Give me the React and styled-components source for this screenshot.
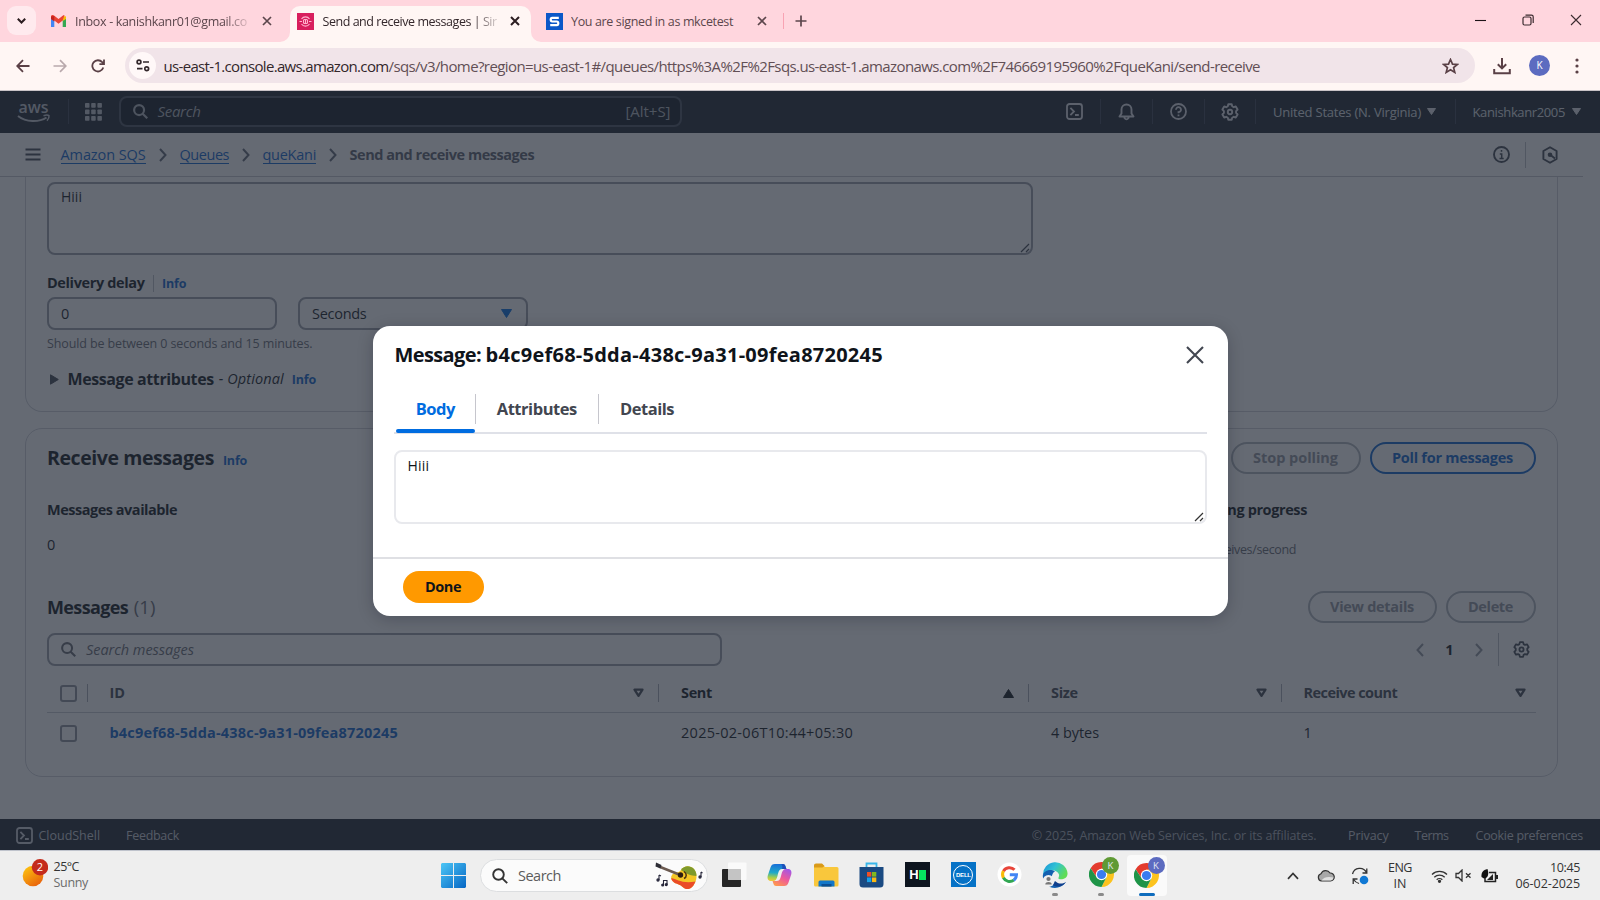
import React from 'react';
import styled, { createGlobalStyle } from 'styled-components';

const Global = createGlobalStyle`
  * { box-sizing: border-box; }
  body {
    margin: 0;
    overflow: hidden;
    font-family: "Open Sans", "Noto Sans", sans-serif;
    background: #fff;
  }
`;

const Screen = styled.div`
  width: 1600px;
  height: 900px;
  display: flex;
  flex-direction: column;
`;

const Text = styled.span`
  display: block;
  flex: none;
  white-space: pre;
  font-size: ${(p) => p.$size || 14.5}px;
  font-weight: ${(p) => p.$weight || 400};
  font-style: ${(p) => (p.$italic ? 'italic' : 'normal')};
  letter-spacing: ${(p) => p.$ls || 0}px;
  line-height: ${(p) => p.$lh || 20}px;
  color: ${(p) => p.$color || 'inherit'};
`;

const Gap = styled.div`
  flex: none;
  width: ${(p) => p.$w}px;
`;

const Spring = styled.div`
  flex: 1;
`;

const Rule = styled.div`
  flex: none;
  width: ${(p) => p.$w || 1}px;
  height: ${(p) => p.$h}px;
  background: ${(p) => p.$color};
`;

/* ---------- Browser window ---------- */

const TabStrip = styled.div`
  height: 42px;
  flex: none;
  display: flex;
  align-items: flex-end;
  background: #ffd6de;
`;

const TabSearch = styled.div`
  width: 29px;
  height: 29px;
  margin: 0 0 7px 7px;
  border-radius: 9px;
  background: #ffeaee;
  display: flex;
  align-items: center;
  justify-content: center;
`;

const Tab = styled.div`
  position: relative;
  width: ${(p) => p.$w}px;
  height: 36px;
  display: flex;
  align-items: center;
  padding: 0 ${(p) => p.$pr || 0}px 6px ${(p) => p.$pl}px;
  border-radius: 10px 10px 0 0;
  background: ${(p) => (p.$active ? '#fff6f4' : 'transparent')};
  color: ${(p) => (p.$active ? '#33272b' : '#5c464c')};
`;

const TabFoot = styled.svg`
  position: absolute;
  bottom: 0;
  ${(p) => (p.$left ? 'left: -10px;' : 'right: -10px;')}
`;

const TabTitle = styled(Text)`
  width: ${(p) => p.$w}px;
  padding-top: 1px;
  overflow: hidden;
  ${(p) => p.$fade && 'mask-image: linear-gradient(90deg, #000 86%, transparent 103%);'}
`;

const WindowButtons = styled.div`
  display: flex;
  align-items: center;
  height: 40px;
  align-self: flex-start;
`;

const WindowButton = styled.div`
  width: 48px;
  display: flex;
  justify-content: center;
`;

const Toolbar = styled.div`
  flex: none;
  height: 49px;
  display: flex;
  align-items: center;
  padding: 0 16px 1px 14px;
  background: #fff6f4;
  border-bottom: 1px solid #c9c3c7;
  color: #5a4046;
`;

const Omnibox = styled.div`
  width: 1350px;
  height: 35px;
  border-radius: 18px;
  background: #f1e4e9;
  display: flex;
  align-items: center;
  padding: 0 16px 0 4px;
`;

const SiteInfo = styled.div`
  width: 27px;
  height: 27px;
  border-radius: 50%;
  background: #fff8f8;
  display: flex;
  align-items: center;
  justify-content: center;
`;

const Avatar = styled.div`
  width: 21px;
  height: 21px;
  border-radius: 50%;
  background: #5c6bc0;
  color: #fff;
  font-size: 10px;
  line-height: 21px;
  text-align: center;
`;

/* ---------- Console page ---------- */

const Page = styled.div`
  position: relative;
  flex: none;
  height: 759px;
  display: flex;
  flex-direction: column;
  background: #fff;
  color: #0f141a;
`;

const Backdrop = styled.div`
  position: absolute;
  inset: 0;
  background: rgba(35, 43, 55, 0.7);
  display: flex;
  justify-content: center;
  align-items: flex-start;
  padding-top: 235px;
`;

const ConsoleHeader = styled.div`
  height: 42px;
  flex: none;
  display: flex;
  align-items: center;
  padding: 0 19px 1px 17px;
  background: #1b222d;
  color: #dfe1e6;
`;

const HeaderSearch = styled.div`
  width: 562.5px;
  height: 31px;
  border: 2px solid #474e5b;
  border-radius: 8px;
  background: #10161f;
  display: flex;
  align-items: center;
  padding: 0 9px 1px 12px;
  color: #b0b4bc;
`;

const Breadcrumbs = styled.div`
  height: 44px;
  width: 1583px;
  flex: none;
  display: flex;
  align-items: center;
  padding: 0 25px 0 24.5px;
  border-bottom: 1px solid #c6c6cd;
`;

const Crumb = styled(Text)`
  color: #0b63ce;
  line-height: 17px;
  border-bottom: 1px solid #0b63ce;
`;

const Content = styled.div`
  flex: 1;
  display: flex;
  flex-direction: column;
  gap: 16px;
  padding: 0 42px 0 25px;
  overflow: hidden;
`;

const Panel = styled.div`
  flex: none;
  height: ${(p) => p.$h}px;
  border: 1px solid #cfd1d8;
  ${(p) => p.$cut && 'border-top: 0;'}
  border-radius: ${(p) => (p.$cut ? '0 0 17px 17px' : '17px')};
  padding: ${(p) => p.$pad};
  display: flex;
  flex-direction: column;
`;

const Field = styled.div`
  position: relative;
  flex: none;
  width: ${(p) => p.$w}px;
  height: ${(p) => p.$h || 33}px;
  border: 2px solid ${(p) => p.$border || '#9a9ea8'};
  border-radius: 8px;
  display: flex;
  align-items: ${(p) => (p.$top ? 'flex-start' : 'center')};
  padding: ${(p) => (p.$top ? '3px' : '0')} 12px 0 12px;
`;

const ResizeGrip = styled.svg`
  position: absolute;
  right: 1px;
  bottom: 0;
`;

const Row = styled.div`
  flex: none;
  display: flex;
  align-items: center;
  height: ${(p) => p.$h}px;
  margin-top: ${(p) => p.$mt || 0}px;
`;

const Info = styled(Text).attrs({ $size: 12.5, $weight: 700, $ls: -0.2, $color: '#0b63ce' })`
  padding-top: ${(p) => p.$drop || 1}px;
`;

const PillButton = styled.div`
  flex: none;
  width: ${(p) => p.$w}px;
  height: 32px;
  border-radius: 16px;
  border: 2px solid ${(p) => (p.$primary ? '#0b63ce' : '#b0b4bc')};
  color: ${(p) => (p.$primary ? '#0b63ce' : '#8f949e')};
  display: flex;
  align-items: center;
  justify-content: center;
`;

const Stats = styled.div`
  display: grid;
  grid-template-columns: 1151px 1fr;
  margin-top: 26px;
`;

const Stat = styled.div`
  display: flex;
  flex-direction: column;
  gap: ${(p) => p.$gap || 15}px;
`;

const TableLine = styled.div`
  flex: none;
  display: grid;
  grid-template-columns: 62.5px 571.5px 370px 252.5px 1fr;
  align-items: center;
  height: ${(p) => p.$h}px;
  ${(p) => p.$head && 'padding-top: 8px; border-bottom: 1px solid #c6c8cf;'}
`;

const Cell = styled.div`
  display: flex;
  align-items: center;
  padding-right: ${(p) => p.$pr || 0}px;
`;

const Checkbox = styled.div`
  flex: none;
  width: 17px;
  height: 17px;
  border: 2px solid #8c919c;
  border-radius: 3px;
  margin: 0 10px 0 13px;
`;

const ConsoleFooter = styled.div`
  height: 31px;
  flex: none;
  display: flex;
  align-items: center;
  padding: 2px 17px 0 16px;
  background: #1b222d;
  color: #c9ccd3;
`;

/* ---------- Dialog ---------- */

const Dialog = styled.div`
  width: 855px;
  height: 290px;
  border-radius: 17px;
  background: #fff;
  box-shadow: 0 3px 16px rgba(0, 7, 22, 0.22);
  display: flex;
  flex-direction: column;
  color: #0f141a;
`;

const DialogHead = styled.div`
  height: 57px;
  display: flex;
  align-items: center;
  justify-content: space-between;
  padding: 0 24px 0 22px;
`;

const DialogTitle = styled.div`
  display: flex;
`;

const DialogBody = styled.div`
  flex: 1;
  padding: 0 21px 0 21px;
`;

const Tabs = styled.div`
  display: flex;
  height: 51px;
  border-bottom: 2px solid #dfe1e8;
  margin-bottom: 16px;
`;

const TabItem = styled.div`
  width: ${(p) => p.$w}px;
  margin-left: ${(p) => p.$ml || 0}px;
  height: 51px;
  display: flex;
  align-items: center;
  justify-content: center;
  color: ${(p) => (p.$on ? '#006ce0' : '#424650')};
  position: relative;
  &::after {
    content: '';
    display: ${(p) => (p.$on ? 'block' : 'none')};
    position: absolute;
    left: 0;
    right: 0;
    bottom: 1px;
    height: 4px;
    border-radius: 2px;
    background: #006ce0;
  }
`;

const DialogFoot = styled.div`
  height: 59px;
  border-top: 2px solid #dfe0e4;
  padding: 11.5px 30px;
`;

const DoneButton = styled.div`
  width: 81px;
  height: 32px;
  border-radius: 16px;
  background: #ff9900;
  display: flex;
  align-items: center;
  justify-content: center;
`;

/* ---------- Taskbar ---------- */

const Taskbar = styled.div`
  flex: none;
  height: 50px;
  border-top: 1px solid #bfc3cc;
  background: #eeeeee;
  display: flex;
  align-items: center;
  color: #333;
`;

const Weather = styled.div`
  width: 441px;
  padding: 0 0 2px 21px;
  display: flex;
  align-items: center;
`;

const Lines = styled.div`
  display: flex;
  flex-direction: column;
  align-items: ${(p) => p.$align || 'flex-start'};
  padding-top: ${(p) => p.$drop || 0}px;
`;

const TaskSearch = styled.div`
  width: 228px;
  height: 33px;
  border-radius: 17px;
  background: #fbfbfb;
  border: 1px solid #dcdee0;
  display: flex;
  align-items: center;
  padding: 0 3px 0 11px;
  margin: 0 0 0 14px;
`;

const TaskIcon = styled.div`
  position: relative;
  flex: none;
  width: ${(p) => p.$w || 45.9}px;
  height: 42px;
  padding-bottom: 2px;
  border-radius: 5px;
  display: flex;
  align-items: center;
  justify-content: center;
`;

const ActiveTile = styled.div`
  position: relative;
  width: 40px;
  height: 41px;
  border-radius: 4px;
  background: #fafafa;
  display: flex;
  align-items: center;
  justify-content: center;
`;

const Dot = styled.div`
  position: absolute;
  bottom: ${(p) => (p.$on ? 0 : 0.5)}px;
  left: calc(50% - ${(p) => (p.$on ? 8 : 3)}px);
  width: ${(p) => (p.$on ? 16 : 6)}px;
  height: 3px;
  border-radius: 2px;
  background: ${(p) => (p.$on ? '#0f6cbd' : '#8a8a8a')};
`;

const ProfileBadge = styled.div`
  position: absolute;
  top: 2px;
  right: ${(p) => p.$right}px;
  width: 17px;
  height: 17px;
  border-radius: 50%;
  background: ${(p) => p.$bg};
  color: #e4e8f4;
  font-size: 9.5px;
  line-height: 17px;
  text-align: center;
`;

const HTile = styled.div`
  width: 25px;
  height: 25px;
  background: #0d141e;
  color: #fff;
  display: flex;
  align-items: center;
  justify-content: center;
  font: 900 13px/25px "Liberation Sans", sans-serif;
  &::after {
    content: '';
    width: 7px;
    height: 10px;
    background: #05e360;
  }
`;

const DellTile = styled.div`
  width: 25px;
  height: 25px;
  background: #0672c6;
  display: flex;
  align-items: center;
  justify-content: center;
`;

const DellRing = styled.div`
  width: 20px;
  height: 20px;
  border: 1px solid #fff;
  border-radius: 50%;
  color: #fff;
  font: 700 6px/18px "Liberation Sans", sans-serif;
  letter-spacing: -0.2px;
  text-align: center;
`;

/* ---------- Icons ---------- */

const Icon = styled.svg`
  flex: none;
`;

const Stroke = ({ w, h = w, vb, sw = 2, children, ...rest }) => (
  <Icon width={w} height={h} viewBox={vb || `0 0 ${w} ${h}`} fill="none" stroke="currentColor"
    strokeWidth={sw} {...rest}>{children}</Icon>
);

const Cross = ({ s = 8, sw = 1.7, color = 'currentColor' }) => (
  <Stroke w={s + 2} sw={sw} stroke={color}><path d={`M1 1L${s + 1} ${s + 1}M${s + 1} 1L1 ${s + 1}`} /></Stroke>
);

const Caret = ({ w = 10, h = 8, up, color = 'currentColor' }) => (
  <Stroke w={w} h={h} sw={1} fill={color} stroke={color} strokeLinejoin="round">
    <path d={up ? `M.5 ${h - 0.5}L${w / 2} .5L${w - 0.5} ${h - 0.5}Z` : `M.5 .5H${w - 0.5}L${w / 2} ${h - 0.5}Z`} />
  </Stroke>
);

const SortCaret = () => (
  <Stroke w={11} h={10} sw={2.3} color="#424650" strokeLinejoin="round"><path d="M1.5 1.6H9.5L5.5 7.8Z" /></Stroke>
);

const Magnifier = ({ s = 16, sw = 2, color }) => (
  <Stroke w={s} vb="0 0 16 16" sw={sw} color={color}><circle cx="6.5" cy="6.5" r="5.3" /><path d="M10.3 10.3L15.2 15.2" /></Stroke>
);

const Gear = ({ s = 18, color }) => (
  <Stroke w={s} vb="0 0 18 18" sw={1.9} strokeLinejoin="round" color={color}>
    <path d="M7.3 1.2H10.7L11.2 3.3L12.7 4.2L14.8 3.5L16.6 6.5L15.1 8.1V9.9L16.6 11.5L14.8 14.5L12.7 13.8L11.2 14.7L10.7 16.8H7.3L6.8 14.7L5.3 13.8L3.2 14.5L1.4 11.5L2.9 9.9V8.1L1.4 6.5L3.2 3.5L5.3 4.2L6.8 3.3Z" />
    <circle cx="9" cy="9" r="2.2" />
  </Stroke>
);

const ShellIcon = ({ s = 17 }) => (
  <Stroke w={s} vb="0 0 17 17" sw={1.8}>
    <rect x="1" y="1" width="15" height="15" rx="2.5" />
    <path d="M4.4 4.8L8 8.5L4.4 12.2M9 12H12.8" />
  </Stroke>
);

const Chevron = ({ left, color = '#5f6573', w = 8, h = 14, sw = 2 }) => (
  <Stroke w={w} h={h} sw={sw} color={color} vb="0 0 8 14"><path d={left ? 'M7 1L1.5 7L7 13' : 'M1 1L6.5 7L1 13'} /></Stroke>
);

const Grip = ({ color }) => (
  <ResizeGrip width="10" height="10" viewBox="0 0 10 10" stroke={color} strokeWidth="1.2" fill="none">
    <path d="M1 9L9 1M6 9L9 6" />
  </ResizeGrip>
);

const Chrome = ({ s = 25 }) => (
  <Icon width={s} height={s} viewBox="0 0 48 48">
    <path d="M24 13H45.3A24 24 0 0 0 3.2 12L14.5 29.5Z" fill="#e33b2e" />
    <path d="M33.5 29.5L24 48A24 24 0 0 0 45.3 13H24Z" fill="#fcc31e" />
    <path d="M14.5 29.5L3.2 12A24 24 0 0 0 24 48L33.5 29.5Z" fill="#1e9447" />
    <circle cx="24" cy="24" r="11" fill="#fff" />
    <circle cx="24" cy="24" r="8.8" fill="#3a7cf0" />
  </Icon>
);

const AwsLogo = () => (
  <Icon width="34" height="32" viewBox="0 0 34 32" fill="none">
    <text x="1.5" y="17" fontFamily="Open Sans, sans-serif" fontSize="16" fontWeight="600" textLength="30"
      lengthAdjust="spacingAndGlyphs" fill="#c3c6cd">aws</text>
    <path d="M1 20C9 26.500 22 26.500 29.500 21.500" stroke="#c3c6cd" strokeWidth="2" />
    <path d="M26.500 19.700C29 18.900 31 18.900 32 19.700C32.300 21.100 31.500 23.100 30 24.700" stroke="#c3c6cd" strokeWidth="1.500" />
  </Icon>
);

const Guitar = () => (
  <Icon width="50" height="30" viewBox="0 0 50 30" fill="none">
    <path d="M18 14C20 11 24 13 27 9C30 4.500 36 4 40 8C44 13 43 20 39 25C36 29 31 28.500 28 25.500C25 22.500 22 23.500 19 20.500C17 18.500 16.500 16 18 14Z" fill="#f3c626" />
    <path d="M27 9C30 4.500 36 4 40 8C41.800 10.200 42.600 12.500 42.400 15C37 15 31 12 27 9Z" fill="#7f9a2c" />
    <path d="M17.300 17C23 18 28 23 41.500 20.500C40 24 38.500 26 37.500 26.500C34.500 29 31 28.500 28 25.500C25 22.500 22 23.500 19 20.500C18 19.500 17.300 18.500 17.300 17Z" fill="#ea4b28" />
    <path d="M5 5.500L27 14.200" stroke="#6b5a50" strokeWidth="2.600" />
    <path d="M2 1.500L7.500 4L6.500 7.500L1.500 5.500Z" fill="#2e2e36" />
    <circle cx="26.500" cy="14" r="2.700" fill="#2c1d12" />
    <path d="M30 10.500C33 12.500 33 16 30 17.500" stroke="#4a3512" strokeWidth="1.500" />
    <g stroke="#26263a" strokeWidth="1.100" fill="#26263a">
      <path d="M5 14V19M5 14L7 15" /><circle cx="4" cy="19" r="1.100" />
      <path d="M9.500 24V19.500H13V23.500" fill="none" /><circle cx="8.700" cy="24" r="1" /><circle cx="12.300" cy="23.600" r="1" />
      <path d="M47 11V16M47 11L48.500 12" /><circle cx="46" cy="16" r="1.100" />
    </g>
  </Icon>
);

const GoogleG = () => (
  <Icon width="25" height="25" viewBox="0 0 25 25" fill="none" strokeWidth="3">
    <circle cx="12.500" cy="12.500" r="12" fill="#fff" />
    <path d="M17.500 7.800A7 7 0 0 0 6.400 9.200" stroke="#e8453a" />
    <path d="M6.400 9.100A7 7 0 0 0 6.400 15.900" stroke="#f9bb06" />
    <path d="M6.400 15.800A7 7 0 0 0 16.800 18.100" stroke="#32a753" />
    <path d="M16.700 18.200A7 7 0 0 0 19.500 12.800H12.800" stroke="#4285f4" />
  </Icon>
);

const Edge = () => (
  <Icon width="26" height="26" viewBox="0 0 26 26">
    <defs>
      <linearGradient id="edgeTop" x1="0" y1="0" x2="1" y2="0.500">
        <stop offset="0" stopColor="#1a8fd8" /><stop offset="0.500" stopColor="#30c2d4" /><stop offset="1" stopColor="#5fdc56" />
      </linearGradient>
    </defs>
    <path d="M1 13A12.300 12.300 0 0 1 25.500 11C26 16 20.500 18 17 17C15.500 16.500 17.500 15 17 12.500C15.500 7.500 6 6 1 13Z" fill="url(#edgeTop)" />
    <path d="M0.800 14C1 9 8 6 13 9.500C9 11 8 20 14.500 22C18 23 21 22.500 24 20C19 27 10 27.500 5 23C2 20.500 .8 17 .8 14Z" fill="#1360b0" />
    <path d="M10 22C14 26 20 25.500 24 20C20 22.500 16 22 13 19Z" fill="#103f8c" />
    <circle cx="6.500" cy="19" r="6" fill="#efefef" />
    <circle cx="6.500" cy="17" r="2.100" fill="#777" /><path d="M3.300 22.500C3.300 19.300 9.700 19.300 9.700 22.500Z" fill="#777" />
  </Icon>
);

const Copilot = () => (
  <Icon width="25" height="24" viewBox="0 0 25 24">
    <defs>
      <linearGradient id="copA" x1="0.300" y1="0" x2="0.200" y2="1">
        <stop offset="0" stopColor="#1870d8" /><stop offset="0.500" stopColor="#1fa9c9" /><stop offset="0.800" stopColor="#a8cf4a" /><stop offset="1" stopColor="#f5c83a" />
      </linearGradient>
      <linearGradient id="copB" x1="0.800" y1="0" x2="0.200" y2="1">
        <stop offset="0" stopColor="#a257e6" /><stop offset="0.500" stopColor="#ee5a9a" /><stop offset="1" stopColor="#ff9a4a" />
      </linearGradient>
    </defs>
    <path d="M8 1H16C18.500 1 18.500 4 19.500 6H15C12 6 11.500 9 10.500 13C9.800 16 8.500 18 6 18H4C1 18 0 15.500 .8 12.500L3.500 4.500C4.300 2 5.500 1 8 1Z" fill="url(#copA)" />
    <path d="M17 23H9C6.500 23 6.500 20 5.500 18H10C13 18 13.500 15 14.500 11C15.200 8 16.500 6 19 6H21C24 6 25 8.500 24.200 11.500L21.500 19.500C20.700 22 19.500 23 17 23Z" fill="url(#copB)" />
    <path d="M16 1C18.500 1 18.500 4 19.500 6H15C16 4 15 1 14 1Z" fill="#1d4fb8" />
  </Icon>
);

/* ---------- Page parts ---------- */

const BrowserTabs = () => (
  <TabStrip>
    <TabSearch><Stroke w={9} h={6} sw={2} color="#2b1d20"><path d="M.8 .8L4.500 4.500L8.200 .8" /></Stroke></TabSearch>
    <Tab $w={254} $pl={15}>
      <Icon width="15" height="12" viewBox="0 0 15 12">
        <path d="M0 1.500V12H3.300V4.800Z" fill="#4285f4" /><path d="M15 1.500V12H11.700V4.800Z" fill="#34a853" />
        <path d="M11.700 1L15 1.500V4L11.700 6Z" fill="#fbbc04" />
        <path d="M0 4V1.400C0 0 1.800-.5 3 .5L7.500 4L12 .5C12.500 0 13.500 0 13.500 0L11.700 5.500L7.500 8.700L3.300 5.500Z" fill="#ea4335" />
        <path d="M0 1.500V4L3.300 6.500V1Z" fill="#c5221f" />
      </Icon>
      <Gap $w={9} />
      <TabTitle $w={173} $size={12.5} $ls={-0.33} $fade>Inbox - kanishkanr01@gmail.co</TabTitle>
      <Gap $w={13.500} />
      <Cross />
    </Tab>
    <Tab $w={241} $pl={7} $active>
      <TabFoot $left width="10" height="10"><path d="M10 0V10H0A10 10 0 0 0 10 0Z" fill="#fff6f4" /></TabFoot>
      <TabFoot width="10" height="10"><path d="M0 0V10H10A10 10 0 0 1 0 0Z" fill="#fff6f4" /></TabFoot>
      <Icon width="17" height="17" viewBox="0 0 17 17" fill="none" stroke="#ffb5cf" strokeWidth="1.100">
        <rect width="17" height="17" fill="#d81f5e" stroke="none" />
        <path d="M4.500 6A4.800 4.800 0 0 1 12.500 6M4.500 11A4.800 4.800 0 0 0 12.500 11" />
        <rect x="6.500" y="6.500" width="4" height="4" rx="1" /><path d="M2.500 8.500H5M12 8.500H14.500M8.500 7V10" />
      </Icon>
      <Gap $w={8.500} />
      <TabTitle $w={174} $size={12.5} $ls={-0.46} $fade>Send and receive messages | Sir</TabTitle>
      <Gap $w={13} />
      <Cross color="#2b1d20" sw={2} />
    </Tab>
    <Tab $w={253} $pl={15} $pr={0}>
      <Icon width="17" height="17" viewBox="0 0 17 17">
        <rect width="17" height="17" fill="#0b57c8" />
        <path d="M12.800 4.800H6.200Q4.700 4.800 4.700 6.600T6.200 8.500H10.800Q12.300 8.500 12.300 10.300T10.800 12.200H4.200" stroke="#fff" strokeWidth="2.200" fill="none" />
      </Icon>
      <Gap $w={8} />
      <TabTitle $w={170} $size={12.5} $ls={-0.36}>You are signed in as mkcetest</TabTitle>
      <Gap $w={16} />
      <Cross />
      <Spring />
      <Rule $w={1.500} $h={16} $color="#f8a3b3" />
    </Tab>
    <Tab $w={38} $pl={11}><Stroke w={12} sw={1.700}><path d="M6 .5V11.500M.5 6H11.500" /></Stroke></Tab>
    <Spring />
    <WindowButtons>
      <WindowButton><Stroke w={11} sw={1.100} color="#1c1316"><path d="M0 5.500H11" /></Stroke></WindowButton>
      <WindowButton>
        <Stroke w={12} sw={1.200} color="#3b2b2f"><rect x="1" y="3" width="8" height="8" rx="1.500" /><path d="M3.500 1.100H9.500Q11.200 1.100 11.200 2.800V9" /></Stroke>
      </WindowButton>
      <WindowButton><Cross s={10} sw={1.100} color="#3b2b2f" /></WindowButton>
    </WindowButtons>
  </TabStrip>
);

const BrowserToolbar = () => (
  <Toolbar>
    <Gap $w={2} />
    <Stroke w={14} sw={1.800}><path d="M13.500 7H1.500M7 1.200L1.200 7L7 12.800" /></Stroke>
    <Gap $w={23} />
    <Stroke w={14} sw={1.700} color="#b9a9ac"><path d="M.5 7H12.500M7 1.200L12.800 7L7 12.800" /></Stroke>
    <Gap $w={24} />
    <Stroke w={14} sw={1.800}><path d="M12.300 8.500A5.600 5.600 0 1 1 11.200 3.200L12.800 4.800M13 .6V5.200H8.400" /></Stroke>
    <Gap $w={20} />
    <Omnibox>
      <SiteInfo>
        <Stroke w={14} h={13} sw={1.700} color="#33272b"><circle cx="3" cy="3" r="1.900" /><path d="M7 3H13M1 9.700H6.500" /><circle cx="10.700" cy="9.700" r="1.900" /></Stroke>
      </SiteInfo>
      <Gap $w={7.500} />
      <Text $size={15} $ls={-0.67} $color="#33272b">us-east-1.console.aws.amazon.com</Text>
      <Text $size={15} $ls={-0.59} $color="#624f55">/sqs/v3/home?region=us-east-1#/queues/https%3A%2F%2Fsqs.us-east-1.amazonaws.com%2F746669195960%2FqueKani/send-receive</Text>
      <Spring />
      <Stroke w={17} h={16} sw={1.700} vb="0 0 17 16"><path d="M8.500 1.500L10.500 6.100L15.300 6.500L11.600 9.600L12.800 14.400L8.500 11.800L4.200 14.400L5.400 9.600L1.700 6.500L6.500 6.100Z" /></Stroke>
    </Omnibox>
    <Gap $w={18} />
    <Stroke w={18} h={18} sw={2}><path d="M9 1V11M4.800 7.200L9 11.400L13.200 7.200M1.200 12V16.200H16.800V12" /></Stroke>
    <Gap $w={18} />
    <Avatar>K</Avatar>
    <Spring />
    <Icon width="4" height="16" viewBox="0 0 4 16" fill="#5a4046"><circle cx="2" cy="2" r="1.600" /><circle cx="2" cy="8" r="1.600" /><circle cx="2" cy="14" r="1.600" /></Icon>
    <Gap $w={5} />
  </Toolbar>
);

const HeaderRule = () => <Rule $h={25} $color="#3a4250" />;

const TopNav = () => (
  <ConsoleHeader>
    <AwsLogo />
    <Gap $w={17} /><HeaderRule /><Gap $w={16} />
    <Icon width="17" height="18" viewBox="0 0 17 18" fill="#c3c6cd">
      {[0, 1, 2].map((r) => [0, 1, 2].map((c) => <rect key={`${r}${c}`} x={c * 6.2} y={r * 6.5} width="4.500" height="4.700" rx="0.800" />))}
    </Icon>
    <Gap $w={17} />
    <HeaderSearch>
      <Magnifier s={15} sw={2.300} />
      <Gap $w={9.500} />
      <Text $size={15} $ls={-0.31} $italic>Search</Text>
      <Spring />
      <Text $size={15} $ls={-0.03}>[Alt+S]</Text>
    </HeaderSearch>
    <Spring />
    <ShellIcon /><Gap $w={17} /><HeaderRule /><Gap $w={17} />
    <Stroke w={17} h={18} sw={1.900} strokeLinejoin="round">
      <path d="M1.500 13.500L3.500 10.500V6.500A5 5 0 0 1 13.500 6.500V10.500L15.500 13.500Z" /><path d="M6.500 14V15Q8.500 17.800 10.500 15V14" />
    </Stroke>
    <Gap $w={17} /><HeaderRule /><Gap $w={17} />
    <Stroke w={17} sw={1.800}>
      <circle cx="8.500" cy="8.500" r="7.500" /><path d="M6 6.800A2.500 2.500 0 1 1 8.500 9.200V10.200M8.500 11.500V13.200" />
    </Stroke>
    <Gap $w={17} /><HeaderRule /><Gap $w={16} />
    <Gear s={18} />
    <Gap $w={16} /><HeaderRule /><Gap $w={17} />
    <Text $size={13} $ls={-0.22}>United States (N. Virginia)</Text>
    <Gap $w={6} /><Caret w={9} h={7} />
    <Gap $w={18.500} /><HeaderRule /><Gap $w={17} />
    <Text $size={13} $ls={-0.37}>Kanishkanr2005</Text>
    <Gap $w={7} /><Caret w={9} h={7} />
  </ConsoleHeader>
);

const BreadcrumbBar = () => (
  <Breadcrumbs>
    <Stroke w={16} h={13} sw={2.200} color="#424650"><path d="M.5 1.500H15.500M.5 6.500H15.500M.5 11.500H15.500" /></Stroke>
    <Gap $w={20} />
    <Crumb $ls={-0.1}>Amazon SQS</Crumb>
    <Gap $w={13} /><Chevron /><Gap $w={13} />
    <Crumb $ls={-0.46}>Queues</Crumb>
    <Gap $w={13} /><Chevron /><Gap $w={12.500} />
    <Crumb $ls={-0.27}>queKani</Crumb>
    <Gap $w={12.500} /><Chevron /><Gap $w={13} />
    <Text $ls={-0.47} $weight={700} $color="#5a606c">Send and receive messages</Text>
    <Spring />
    <Stroke w={17} sw={1.900} color="#424650"><circle cx="8.500" cy="8.500" r="7.500" /><path d="M8.500 4V5.800M6.800 8H8.700V12.500M6.500 12.500H10.700" strokeWidth="1.500" /></Stroke>
    <Gap $w={15.500} /><Rule $h={26} $color="#bcbec6" /><Gap $w={16} />
    <Stroke w={16} h={18} sw={1.900} color="#424650" strokeLinejoin="round"><path d="M8 1.200L14.600 5V13L8 16.800L1.400 13V5Z" /><circle cx="8" cy="8.800" r="2.300" fill="currentColor" stroke="none" /><path d="M8.500 9L13 12.500" /></Stroke>
  </Breadcrumbs>
);

const SendPanel = () => (
  <Panel $h={235} $cut $pad="5px 21px 0 21px">
    <Field $w={985.500} $h={73} $top><Text $size={14} $lh={20}>Hiii</Text><Grip color="#424650" /></Field>
    <Row $h={20} $mt={18} >
      <Text $weight={700} $ls={-0.37}>Delivery delay</Text>
      <Gap $w={8.500} /><Rule $h={17} $color="#bcbec6" /><Gap $w={8} />
      <Info>Info</Info>
    </Row>
    <Row $h={33} $mt={4}>
      <Field $w={230}><Text>0</Text></Field>
      <Gap $w={21} />
      <Field $w={230}><Text $ls={-0.28}>Seconds</Text><Spring /><Caret w={11} h={9} color="#006ce0" /><Gap $w={2} /></Field>
    </Row>
    <Row $h={20} $mt={4}><Text $size={12.5} $ls={-0.12} $color="#656871">Should be between 0 seconds and 15 minutes.</Text></Row>
    <Row $h={24} $mt={13}>
      <Gap $w={3} />
      <Stroke w={9} h={11} sw={1} fill="#424650" color="#424650"><path d="M.5 .8L8.300 5.500L.5 10.200Z" /></Stroke>
      <Gap $w={8.500} />
      <Text $size={16} $weight={700} $ls={-0.4} $lh={24}>Message attributes</Text>
      <Gap $w={5} />
      <Text $italic $ls={0.11} $lh={24}>- Optional</Text>
      <Gap $w={8} />
      <Info>Info</Info>
    </Row>
  </Panel>
);

const ReceivePanel = () => (
  <Panel $h={349} $pad="13px 21.500px 0 21px">
    <Row $h={32}>
      <Text $size={19.5} $weight={700} $ls={-0.42} $lh={28}>Receive messages</Text>
      <Gap $w={9} /><Info $drop={5}>Info</Info>
      <Spring />
      <PillButton $w={130}><Text $weight={700} $ls={-0.03}>Stop polling</Text></PillButton>
      <Gap $w={9} />
      <PillButton $w={166} $primary><Text $weight={700} $ls={-0.27}>Poll for messages</Text></PillButton>
    </Row>
    <Stats>
      <Stat><Text $weight={700} $ls={-0.48}>Messages available</Text><Text>0</Text></Stat>
      <Stat $gap={20}><Text $weight={700} $ls={-0.4}>Polling progress</Text><Text $size={12.5} $ls={-0.37} $color="#656871">0 receives/second</Text></Stat>
    </Stats>
    <Row $h={32} $mt={31}>
      <Text $size={18} $weight={700} $ls={-0.62} $lh={28}>Messages</Text>
      <Gap $w={5.500} /><Text $size={18.5} $lh={28} $ls={0.17} $color="#656871">(1)</Text>
      <Spring />
      <PillButton $w={129}><Text $weight={700} $ls={-0.29}>View details</Text></PillButton>
      <Gap $w={9} />
      <PillButton $w={90}><Text $weight={700} $ls={-0.36}>Delete</Text></PillButton>
    </Row>
    <Row $h={33} $mt={10}>
      <Field $w={675}><Magnifier s={15} sw={2.200} color="#656871" /><Gap $w={10} /><Text $italic $ls={-0.05} $color="#656871">Search messages</Text></Field>
      <Spring />
      <Chevron left color="#8f949e" /><Gap $w={21.500} /><Text $weight={700}>1</Text><Gap $w={21} /><Chevron color="#8f949e" />
      <Gap $w={15.500} /><Rule $h={33} $color="#bcbec6" /><Gap $w={14} /><Gear s={17} color="#424650" /><Gap $w={5.500} />
    </Row>
    <TableLine $head $h={47}>
      <Cell><Checkbox /><Rule $h={18} $color="#a7abb4" /></Cell>
      <Cell $pr={22}><Text $weight={700} $color="#424650">ID</Text><Spring /><SortCaret /><Gap $w={14} /><Rule $h={18} $color="#a7abb4" /></Cell>
      <Cell $pr={22}><Text $weight={700} $ls={-0.34}>Sent</Text><Spring /><Caret up w={11} h={9} /><Gap $w={14} /><Rule $h={18} $color="#a7abb4" /></Cell>
      <Cell $pr={22}><Text $weight={700} $ls={-0.3} $color="#424650">Size</Text><Spring /><SortCaret /><Gap $w={14} /><Rule $h={18} $color="#a7abb4" /></Cell>
      <Cell $pr={9.500}><Text $weight={700} $ls={-0.56} $color="#424650">Receive count</Text><Spring /><SortCaret /></Cell>
    </TableLine>
    <TableLine $h={40}>
      <Cell><Checkbox /></Cell>
      <Cell><Text $weight={700} $ls={0.19} $color="#0b63ce">b4c9ef68-5dda-438c-9a31-09fea8720245</Text></Cell>
      <Cell><Text $ls={0.28}>2025-02-06T10:44+05:30</Text></Cell>
      <Cell><Text $ls={-0.06}>4 bytes</Text></Cell>
      <Cell><Text>1</Text></Cell>
    </TableLine>
  </Panel>
);

const MessageDialog = () => (
  <Dialog>
    <DialogHead>
      <DialogTitle>
        <Text $size={20} $weight={700} $ls={-0.62} $lh={28}>Message: </Text>
        <Text $size={20} $weight={700} $ls={0.25} $lh={28}>b4c9ef68-5dda-438c-9a31-09fea8720245</Text>
      </DialogTitle>
      <Cross s={16} sw={2.100} color="#424650" />
    </DialogHead>
    <DialogBody>
      <Tabs>
        <TabItem $on $w={79.500} $ml={2}><Text $size={16.5} $weight={700} $ls={-0.5}>Body</Text></TabItem>
        <Row $h={51}><Rule $h={30} $color="#c6c6cd" /></Row>
        <TabItem $w={121.500}><Text $size={16.5} $weight={700} $ls={-0.46}>Attributes</Text></TabItem>
        <Row $h={51}><Rule $h={30} $color="#c6c6cd" /></Row>
        <TabItem $w={97}><Text $size={16.5} $weight={700} $ls={-0.48}>Details</Text></TabItem>
      </Tabs>
      <Field $w={813} $h={74} $top $border="#e8e9ed"><Text $size={14} $ls={0.2} $lh={21}>Hiii</Text><Grip color="#333" /></Field>
    </DialogBody>
    <DialogFoot><DoneButton><Text $weight={700} $ls={-0.45}>Done</Text></DoneButton></DialogFoot>
  </Dialog>
);

const SystemTaskbar = () => (
  <Taskbar>
    <Weather>
      <Icon width="27" height="31" viewBox="0 0 27 31">
        <defs><linearGradient id="sun" x1="0" y1="0" x2="0.700" y2="1"><stop offset="0.100" stopColor="#fdc20f" /><stop offset="1" stopColor="#e8620c" /></linearGradient></defs>
        <circle cx="12" cy="17" r="10.300" fill="url(#sun)" />
        <circle cx="19" cy="8.300" r="8.200" fill="#c42b1c" />
        <text x="19" y="12.300" fontFamily="Open Sans, sans-serif" fontSize="11" fill="#fff" textAnchor="middle">2</text>
      </Icon>
      <Gap $w={5.500} />
      <Lines $drop={1}><Text $size={12.5} $ls={-0.51} $lh={16}>25°C</Text><Text $size={12.5} $ls={-0.32} $lh={16} $color="#6b6b6b">Sunny</Text></Lines>
    </Weather>
    <Icon width="25" height="25" viewBox="0 0 25 25">
      <defs><linearGradient id="win" x1="0" y1="0" x2="1" y2="1"><stop offset="0" stopColor="#4cc6f6" /><stop offset="1" stopColor="#0566c4" /></linearGradient></defs>
      <path d="M1 0H12V12H0V1ZM13 0H24L25 1V12H13ZM0 13H12V25H1L0 24ZM13 13H25V24L24 25H13Z" fill="url(#win)" />
    </Icon>
    <TaskSearch>
      <Magnifier s={16} sw={1.900} /><Gap $w={10} />
      <Text $ls={-0.49} $color="#5c5c5c">Search</Text><Spring /><Guitar />
    </TaskSearch>
    <Gap $w={3} />
    <TaskIcon>
      <Icon width="26" height="26" viewBox="0 0 26 26"><rect x="1" y="7" width="19" height="18" rx="1" fill="#262626" /><rect x="7" y="0.500" width="18.500" height="17.500" rx="1" fill="#fff" fillOpacity="0.720" /><rect x="7" y="7" width="13" height="11" fill="#c4c4c4" fillOpacity="0.700" /></Icon>
    </TaskIcon>
    <TaskIcon><Copilot /></TaskIcon>
    <TaskIcon>
      <Icon width="26" height="24" viewBox="0 0 26 24"><path d="M1 3Q1 1 3 1H9L12 4H24Q25.500 4 25.500 5.500V22Q25.500 23.500 24 23.500H2.500Q1 23.500 1 22Z" fill="#f9c73c" /><path d="M1 4.500V2.500Q1 .5 3 .5H9L11.500 3L9.500 4.500Z" fill="#d99a1a" /><path d="M5.500 23.500V19Q5.500 17.500 7 17.500H20Q21.500 17.500 21.500 19V23.500Z" fill="#1277c8" /><path d="M8.500 23.500V21H18.500V23.500Z" fill="#0b4f94" /></Icon>
    </TaskIcon>
    <TaskIcon>
      <Icon width="25" height="26" viewBox="0 0 25 26"><path d="M7.500 5V1.500H17.500V5" stroke="#38b6ea" strokeWidth="1.800" fill="none" /><path d="M.5 5H24.500V22Q24.500 25.500 21 25.500H4Q.5 25.500 .5 22Z" fill="#1a4a82" /><rect x="8" y="10" width="4.300" height="4.600" fill="#f05024" /><rect x="13" y="10" width="4.300" height="4.600" fill="#80b91e" /><rect x="8" y="15.500" width="4.300" height="4.600" fill="#18a0e8" /><rect x="13" y="15.500" width="4.300" height="4.600" fill="#fbb912" /></Icon>
    </TaskIcon>
    <TaskIcon><HTile>H</HTile></TaskIcon>
    <TaskIcon><DellTile><DellRing>DELL</DellRing></DellTile></TaskIcon>
    <TaskIcon><GoogleG /></TaskIcon>
    <TaskIcon><Edge /><Dot /></TaskIcon>
    <TaskIcon><Chrome /><ProfileBadge $right={5} $bg="#5f9a34">K</ProfileBadge><Dot /></TaskIcon>
    <Gap $w={2.500} />
    <ActiveTile><Chrome /><ProfileBadge $right={2} $bg="#5c6bc0">K</ProfileBadge><Dot $on /></ActiveTile>
    <Spring />
    <Stroke w={12} h={8} sw={1.700}><path d="M1 6.800L6 1.500L11 6.800" /></Stroke>
    <Gap $w={18} />
    <Icon width="18" height="13" viewBox="0 0 18 13"><path d="M4.500 12A3.700 3.700 0 0 1 4 4.800A5 5 0 0 1 13 4A4 4 0 0 1 13.500 12Z" fill="#a8a8a8" stroke="#333" strokeWidth="1.200" /><path d="M4.500 11.400Q8 6.500 16.500 8.500Q16 11.300 13.500 11.400Z" fill="#e0e0e0" /></Icon>
    <Gap $w={16} />
    <Icon width="18" height="18" viewBox="0 0 18 18" fill="none" stroke="#333" strokeWidth="1.300"><path d="M1.500 7A7.500 7.500 0 0 1 15.500 5.500M15.800 1.500V6H11.500M2.200 17V12H6.500M2.500 12.500Q4.500 15.500 8 16.500" /><circle cx="13" cy="13" r="4.300" fill="#0f78d4" stroke="none" /></Icon>
    <Gap $w={19} />
    <Lines $align="center"><Text $size={12.5} $ls={-0.48} $lh={16}>ENG</Text><Text $size={12.5} $lh={16}>IN</Text></Lines>
    <Gap $w={19} />
    <Stroke w={17} h={14} sw={1.300}><path d="M1 5.500A10.700 10.700 0 0 1 16 5.500M3.300 8.300A7.400 7.400 0 0 1 13.700 8.300M5.700 10.700A4 4 0 0 1 11.300 10.700" /><circle cx="8.500" cy="12.300" r="1" fill="currentColor" /></Stroke>
    <Gap $w={7.500} />
    <Stroke w={17} h={13} sw={1.300}><path d="M1 4.500H3.500L7 1V12L3.500 8.500H1Z M11 4.300L15.500 8.800M15.500 4.300L11 8.800" /></Stroke>
    <Gap $w={9} />
    <Icon width="17" height="14" viewBox="0 0 17 14"><path d="M4 4.500V12.500H14.500V3.500H8" fill="none" stroke="#222" strokeWidth="1.500" /><path d="M15 6H17V10H15Z" fill="#222" /><path d="M6.500 0C2 1 0 3.500 .5 8L3 9.500C7.500 9 8 4.500 6.500 0Z" fill="#111" /><path d="M6 11L12 5V11Z" fill="#222" /></Icon>
    <Gap $w={17} />
    <Lines $align="flex-end"><Text $size={12.5} $ls={-0.37} $lh={16}>10:45</Text><Text $size={12.5} $ls={-0.07} $lh={16}>06-02-2025</Text></Lines>
    <Gap $w={20} />
  </Taskbar>
);

export default function App() {
  return (
    <Screen>
      <Global />
      <BrowserTabs />
      <BrowserToolbar />
      <Page>
        <TopNav />
        <BreadcrumbBar />
        <Content>
          <SendPanel />
          <ReceivePanel />
        </Content>
        <ConsoleFooter>
          <ShellIcon /><Gap $w={5.500} />
          <Text $size={12.5} $ls={-0.02}>CloudShell</Text>
          <Gap $w={26} /><Text $size={12.5} $ls={-0.29}>Feedback</Text>
          <Spring />
          <Text $size={12.5} $ls={-0.13} $color="#a8acb4">© 2025, Amazon Web Services, Inc. or its affiliates.</Text>
          <Gap $w={31.500} /><Text $size={12.5} $ls={-0.1}>Privacy</Text>
          <Gap $w={26} /><Text $size={12.5} $ls={-0.51}>Terms</Text>
          <Gap $w={27} /><Text $size={12.5} $ls={-0.29}>Cookie preferences</Text>
        </ConsoleFooter>
        <Backdrop><MessageDialog /></Backdrop>
      </Page>
      <SystemTaskbar />
    </Screen>
  );
}
